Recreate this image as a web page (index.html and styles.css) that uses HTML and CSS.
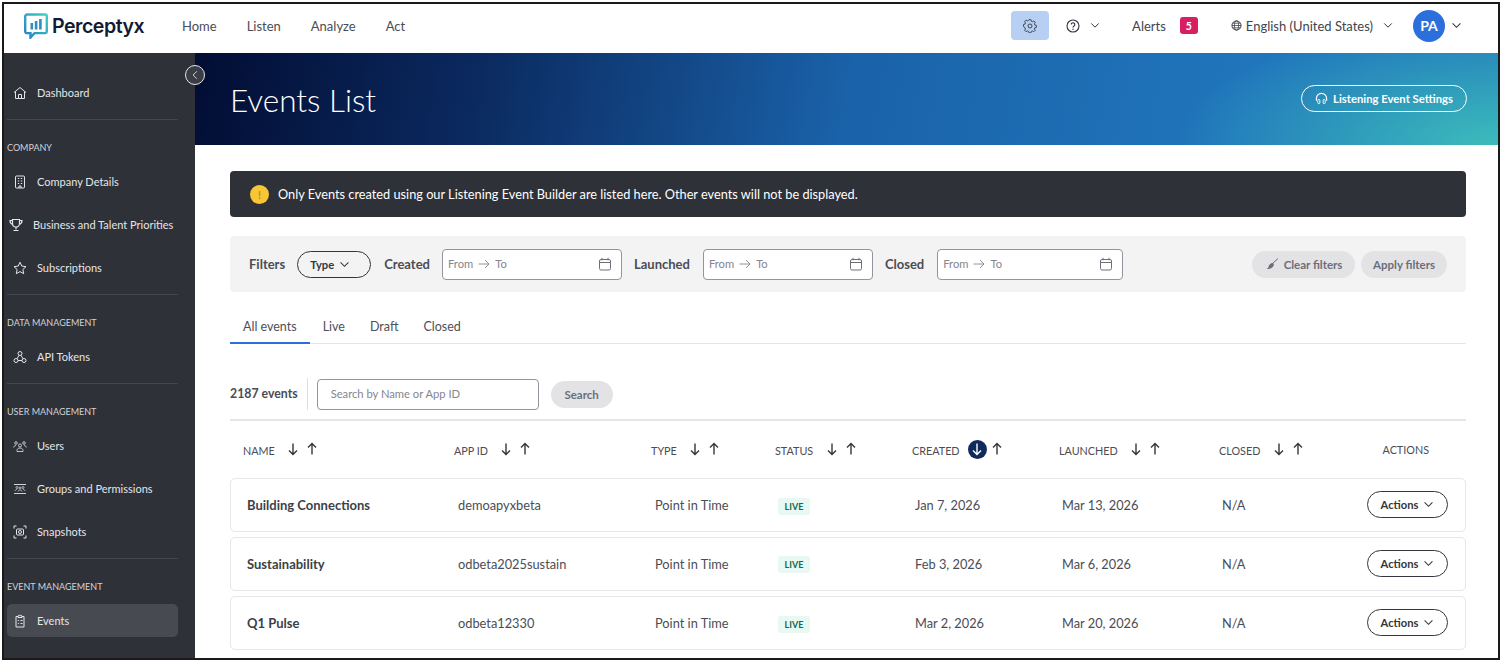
FILE: index.html
```html
<!DOCTYPE html>
<html lang="en">
<head>
<meta charset="utf-8">
<title>Events List</title>
<link rel="stylesheet" href="styles.css">
</head>
<body>
<svg class="defs" width="0" height="0" aria-hidden="true">
  <symbol id="down" viewBox="0 0 12 14"><path d="M6 1.5v11M2 8.5l4 4 4-4" fill="none" stroke="currentColor" stroke-width="1.4"/></symbol>
  <symbol id="up" viewBox="0 0 12 14"><path d="M6 12.500v-11M2 5.500l4-4 4 4" fill="none" stroke="currentColor" stroke-width="1.4"/></symbol>
  <symbol id="chev" viewBox="0 0 12 8"><path d="M1.500 1.500L6 6l4.500-4.500" fill="none" stroke="currentColor" stroke-width="1.200"/></symbol>
  <symbol id="cal" viewBox="0 0 14 14"><rect x="1.500" y="2.500" width="11" height="10.500" rx="1.500" fill="none" stroke="currentColor"/><path d="M1.500 5.500h11M4 .8v2.500M10 .8v2.500" fill="none" stroke="currentColor"/></symbol>
  <symbol id="arrow" viewBox="0 0 12 10"><path d="M.5 5h10.500M7 1l4 4-4 4" fill="none" stroke="currentColor" stroke-width=".9"/></symbol>
</svg>
<div class="frame">
  <header class="topbar">
    <div class="logo">
      <svg class="logo-mark" viewBox="0 0 24 26"><defs><linearGradient id="lg" x1="0" y1="1" x2="1" y2="0"><stop offset="0" stop-color="#2a7fc4"/><stop offset="1" stop-color="#3fd0c0"/></linearGradient></defs><path d="M3 1.500h18a1.800 1.800 0 0 1 1.800 1.800v15a1.800 1.800 0 0 1-1.800 1.800H10.500L6.500 24.500v-4.400H3a1.800 1.800 0 0 1-1.800-1.800v-15A1.800 1.800 0 0 1 3 1.500z" fill="none" stroke="url(#lg)" stroke-width="2.400"/><path d="M6.500 10h2.600v6.500H6.500zM10.800 8h2.600v8.500h-2.600zM15.100 6h2.600v10.500h-2.600z" fill="#2f8fc0"/></svg>
      <span class="logo-text">Perceptyx</span>
    </div>
    <nav class="mainnav">
      <a>Home</a><a>Listen</a><a>Analyze</a><a>Act</a>
    </nav>
    <div class="tools">
      <span class="gear">
        <svg viewBox="0 0 16 16" width="14" height="14"><path d="M6.800 1h2.400l.4 1.900 1.300.6 1.700-1 1.600 1.800-1 1.600.5 1.300 1.800.5v2.400l-1.800.5-.5 1.300 1 1.600-1.700 1.700-1.600-1-1.300.6-.4 1.800H6.800l-.5-1.800-1.300-.6-1.600 1-1.700-1.700 1-1.600-.5-1.300L.4 9.100V6.700l1.800-.5.500-1.300-1-1.600L3.400 1.500l1.600 1 1.300-.6z" transform="translate(.2 -.2) scale(.97)" fill="none" stroke="#3c4048" stroke-width="1.100" stroke-linejoin="round"/><circle cx="8" cy="8" r="2.300" fill="none" stroke="#3c4048" stroke-width="1.100"/></svg>
      </span>
      <span class="help">
        <svg viewBox="0 0 14 14" width="14" height="14"><circle cx="7" cy="7" r="6" fill="none" stroke="#30343b" stroke-width="1.100"/><path d="M5.200 5.600a1.800 1.800 0 1 1 2.800 1.500c-.7.400-1 .7-1 1.400" fill="none" stroke="#30343b" stroke-width="1.100"/><circle cx="7" cy="10.300" r=".7" fill="#30343b"/></svg>
        <svg class="chev" width="10" height="7"><use href="#chev"/></svg>
      </span>
      <span class="alerts">Alerts<b class="badge">5</b></span>
      <span class="lang">
        <svg viewBox="0 0 12 12" width="11" height="11"><circle cx="6" cy="6" r="5" fill="none" stroke="#30343b"/><ellipse cx="6" cy="6" rx="2.300" ry="5" fill="none" stroke="#30343b" stroke-width=".8"/><path d="M1 6h10M1.700 3.500h8.600M1.700 8.500h8.600" stroke="#30343b" stroke-width=".8"/></svg>
        <span class="lang-text">English (United States)</span>
        <svg class="chev" width="10" height="7"><use href="#chev"/></svg>
      </span>
      <span class="avatar">PA</span>
      <svg class="chev avatar-chev" width="11" height="7"><use href="#chev"/></svg>
    </div>
  </header>
  <div class="body">
    <aside class="sidebar">
      <a class="item">
        <svg class="ico" viewBox="0 0 14 14"><path d="M1 6.500L7 1.500l6 5M2.500 5.500V12.500h9V5.500M5.500 12.500V8.500h3v4"/></svg>Dashboard
      </a>
      <hr class="rule">
      <div class="sect">COMPANY</div>
      <a class="item">
        <svg class="ico" viewBox="0 0 14 14"><rect x="2.500" y="1" width="9" height="12" rx="1"/><path d="M4.800 3.500h1.400M7.800 3.500h1.400M4.800 6h1.400M7.800 6h1.400M4.800 8.500h1.400M7.800 8.500h1.400M6 13v-2h2v2"/></svg>Company Details
      </a>
      <a class="item item-wide">
        <svg class="ico" viewBox="0 0 14 14"><path d="M3.500 1.500h7v4a3.500 3.500 0 0 1-7 0zM3.500 2.500H1c0 2.500 1 3.500 3 4M10.500 2.500H13c0 2.500-1 3.500-3 4M7 9v2.500M4.500 12.500h5" stroke-width="1.200"/></svg>Business and Talent Priorities
      </a>
      <a class="item">
        <svg class="ico" viewBox="0 0 14 14"><path d="M7 1.200l1.800 3.900 4.200.5-3.100 2.900.8 4.200L7 10.600l-3.700 2.100.8-4.200L1 5.600l4.200-.5z"/></svg>Subscriptions
      </a>
      <hr class="rule">
      <div class="sect">DATA MANAGEMENT</div>
      <a class="item">
        <svg class="ico" viewBox="0 0 14 14"><circle cx="7" cy="3.500" r="2"/><circle cx="3" cy="10.500" r="2"/><circle cx="11" cy="10.500" r="2"/><path d="M6 5.300L4 8.800M8 5.300l2 3.500M5 10.500h4"/></svg>API Tokens
      </a>
      <hr class="rule">
      <div class="sect">USER MANAGEMENT</div>
      <a class="item">
        <svg class="ico" viewBox="0 0 14 14"><circle cx="3" cy="4" r="1.300" stroke-width=".8"/><circle cx="11" cy="4" r="1.300" stroke-width=".8"/><circle cx="7" cy="6.500" r="1.500" stroke-width=".8"/><path d="M.8 8.500c0-1.500 1-2 2.200-2M13.200 8.500c0-1.500-1-2-2.200-2M4 12.500v-1c0-1.500 1.200-2.500 3-2.500s3 1 3 2.500v1z" stroke-width=".8"/></svg>Users
      </a>
      <a class="item">
        <svg class="ico" viewBox="0 0 14 14"><path d="M1 2.500h12M1 11.500h12" stroke-width=".9"/><circle cx="4" cy="5.500" r="1" stroke-width=".7"/><circle cx="10" cy="5.500" r="1" stroke-width=".7"/><circle cx="7" cy="6" r="1" stroke-width=".7"/><path d="M2 9c0-1 1-1.500 2-1.500M12 9c0-1-1-1.500-2-1.500M5 9.500c0-1 1-1.500 2-1.500s2 .5 2 1.500" stroke-width=".7"/></svg>Groups and Permissions
      </a>
      <a class="item">
        <svg class="ico" viewBox="0 0 14 14"><path d="M3.500 1H1v2.500M10.500 1H13v2.500M3.500 13H1v-2.500M10.500 13H13v-2.500"/><rect x="3.500" y="4" width="7" height="6" rx="1"/><circle cx="7" cy="7" r="1.500"/></svg>Snapshots
      </a>
      <hr class="rule">
      <div class="sect">EVENT MANAGEMENT</div>
      <a class="item active">
        <svg class="ico" viewBox="0 0 14 14"><path d="M5 2.500H3v10.500h8V2.500H9M5 3.500V1.800h1.200a.8.8 0 0 1 1.600 0H9v1.700z"/><path d="M4.800 6.500h1M7.500 6.500h2M4.800 9.500h1M7.500 9.500h2"/></svg>Events
      </a>
    </aside>
    <button class="collapse" aria-label="Collapse"><svg viewBox="0 0 8 12" width="6" height="10"><path d="M6.500 1L1.500 6l5 5" fill="none" stroke="#fff" stroke-width="1"/></svg></button>
    <main class="main">
      <section class="hero">
        <h1>Events List</h1>
        <a class="hero-btn">
          <svg viewBox="0 0 14 14" width="13" height="13"><path d="M1.500 9.500V7a5.500 5.500 0 0 1 11 0v2.500" fill="none" stroke="#fff" stroke-width="1.300"/><rect x="3" y="8" width="2.200" height="4.500" rx="1" fill="none" stroke="#fff"/><rect x="8.800" y="8" width="2.200" height="4.500" rx="1" fill="none" stroke="#fff"/></svg>
          Listening Event Settings
        </a>
      </section>
      <section class="content">
        <div class="banner">
          <span class="warn">!</span>
          Only Events created using our Listening Event Builder are listed here. Other events will not be displayed.
        </div>
        <div class="filters">
          <span class="flabel">Filters</span>
          <span class="pill type-pill">Type <svg width="11" height="7"><use href="#chev"/></svg></span>
          <span class="flabel">Created</span>
          <span class="date d1"><span>From</span><svg class="arr" width="12" height="10"><use href="#arrow"/></svg><span>To</span><svg class="cal" width="14" height="14"><use href="#cal"/></svg></span>
          <span class="flabel flabel-wide">Launched</span>
          <span class="date d2"><span>From</span><svg class="arr" width="12" height="10"><use href="#arrow"/></svg><span>To</span><svg class="cal" width="14" height="14"><use href="#cal"/></svg></span>
          <span class="flabel flabel-wide">Closed</span>
          <span class="date d3"><span>From</span><svg class="arr" width="12" height="10"><use href="#arrow"/></svg><span>To</span><svg class="cal" width="14" height="14"><use href="#cal"/></svg></span>
          <span class="gbtn clear">
            <svg viewBox="0 0 14 14" width="14" height="14"><path d="M13 1.500L7.500 6.500" stroke="#6b6e78" stroke-width="1"/><path d="M8 6c1 1 1 2 .5 3-1 2-3.500 3-7 3 1.500-.7 2-1.500 2.300-3C4.200 7.500 6.500 5.500 8 6z" fill="#6b6e78"/></svg>
            Clear filters
          </span>
          <span class="gbtn apply">Apply filters</span>
        </div>
        <div class="tabs">
          <a class="tab on">All events</a><a class="tab">Live</a><a class="tab">Draft</a><a class="tab">Closed</a>
        </div>
        <div class="searchrow">
          <span class="count">2187 events</span>
          <span class="searchbox">Search by Name or App ID</span>
          <span class="gbtn search">Search</span>
        </div>
        <div class="thead">
          <span class="th">NAME<svg class="sort" width="12" height="14"><use href="#down"/></svg><svg class="sort" width="12" height="14"><use href="#up"/></svg></span>
          <span class="th">APP ID<svg class="sort" width="12" height="14"><use href="#down"/></svg><svg class="sort" width="12" height="14"><use href="#up"/></svg></span>
          <span class="th">TYPE<svg class="sort" width="12" height="14"><use href="#down"/></svg><svg class="sort" width="12" height="14"><use href="#up"/></svg></span>
          <span class="th">STATUS<svg class="sort" width="12" height="14"><use href="#down"/></svg><svg class="sort" width="12" height="14"><use href="#up"/></svg></span>
          <span class="th">CREATED<span class="sort-on"><svg width="12" height="14"><use href="#down"/></svg></span><svg class="sort after-on" width="12" height="14"><use href="#up"/></svg></span>
          <span class="th">LAUNCHED<svg class="sort" width="12" height="14"><use href="#down"/></svg><svg class="sort" width="12" height="14"><use href="#up"/></svg></span>
          <span class="th">CLOSED<svg class="sort" width="12" height="14"><use href="#down"/></svg><svg class="sort" width="12" height="14"><use href="#up"/></svg></span>
          <span class="th th-actions">ACTIONS</span>
        </div>
        <div class="row">
          <b class="name">Building Connections</b><span>demoapyxbeta</span><span>Point in Time</span><span><i class="live low">LIVE</i></span><span>Jan 7, 2026</span><span>Mar 13, 2026</span><span>N/A</span>
          <span class="pill act">Actions <svg width="11" height="7"><use href="#chev"/></svg></span>
        </div>
        <div class="row">
          <b class="name">Sustainability</b><span>odbeta2025sustain</span><span>Point in Time</span><span><i class="live">LIVE</i></span><span>Feb 3, 2026</span><span>Mar 6, 2026</span><span>N/A</span>
          <span class="pill act">Actions <svg width="11" height="7"><use href="#chev"/></svg></span>
        </div>
        <div class="row">
          <b class="name">Q1 Pulse</b><span>odbeta12330</span><span>Point in Time</span><span><i class="live low">LIVE</i></span><span>Mar 2, 2026</span><span>Mar 20, 2026</span><span>N/A</span>
          <span class="pill act">Actions <svg width="11" height="7"><use href="#chev"/></svg></span>
        </div>
      </section>
    </main>
  </div>
</div>
</body>
</html>
```

FILE: styles.css
```css
* { box-sizing: border-box; }
html, body { margin: 0; padding: 0; background: #fff; height: 100%; overflow: hidden; }
body { font-family: "Lato", "Open Sans", sans-serif; color: #3c3f47; font-size: 13px; }
.defs { position: absolute; }
a { color: inherit; text-decoration: none; }

.frame { width: 1498px; height: 658px; margin: 2px 0 0 2px; border: 2px solid #1a1a1a; overflow: hidden; display: flex; flex-direction: column; }

/* top bar */
.topbar { height: 49px; flex: none; display: flex; align-items: center; background: #fff; padding-bottom: 6px; }
.logo { display: flex; align-items: center; margin-left: 20px; width: 158px; }
.logo-mark { width: 24px; height: 26px; margin-right: 4px; }
.logo-text { font-family: "Inter", sans-serif; font-weight: 600; font-size: 19.600px; color: #141a33; letter-spacing: -.5px; }
.mainnav { display: flex; gap: 30px; font-size: 13px; color: #4a4d55; }
.tools { margin-left: auto; display: flex; align-items: center; font-size: 13px; color: #41444c; }
.gear { width: 38px; height: 29px; background: #b6cff3; border-radius: 4px; display: flex; align-items: center; justify-content: center; margin-right: 17px; }
.help { display: flex; align-items: center; gap: 10px; margin-right: 32px; }
.chev { color: #30343b; }
.alerts { display: flex; align-items: center; gap: 14px; margin-right: 33px; }
.badge { width: 18px; height: 17px; border-radius: 3px; background: #d81f63; color: #fff; font-size: 10.500px; display: flex; align-items: center; justify-content: center; font-weight: 700; }
.lang { display: flex; align-items: center; gap: 4px; margin-right: 20px; }
.lang-text { margin-right: 6px; }
.avatar { width: 32px; height: 32px; border-radius: 50%; background: #2a6fdc; color: #fff; font-weight: 700; font-size: 14px; display: flex; align-items: center; justify-content: center; }
.avatar-chev { margin: 0 36px 0 6px; }

/* layout */
.body { flex: 1; display: flex; position: relative; min-height: 0; }
.sidebar { width: 191px; flex: none; background: #2e3138; padding: 23px 17px 0 3px; color: #e4e5e8; font-size: 11px; }
.item { display: flex; align-items: center; height: 33px; margin-bottom: 10px; padding-left: 6px; gap: 10px; border-radius: 5px; white-space: nowrap; }
.item-wide { padding-left: 2px; }
.item.active { background: #484a52; margin-bottom: 0; }
.ico { width: 14px; height: 14px; flex: none; fill: none; stroke: #e4e5e8; stroke-width: 1; }
.rule { margin: 0 0 21px; border: 0; border-top: 1px solid #43464e; }
.sect { height: 14px; line-height: 14px; margin-bottom: 10px; font-size: 9px; color: #d2d3d7; white-space: nowrap; }
.collapse { position: absolute; left: 181px; top: 12px; width: 20px; height: 20px; border-radius: 50%; border: 1px solid #e6e6e6; background: #3a3d45; padding: 0; display: flex; align-items: center; justify-content: center; }

.main { flex: 1; min-width: 0; display: flex; flex-direction: column; }
.hero { height: 92px; flex: none; background: radial-gradient(ellipse 320px 130px at 100% 100%, #3cbcbb, rgba(60, 188, 187, 0)), linear-gradient(100deg, #020d33 0%, #0b2a60 22%, #1a62a9 50%, #2075bb 80%, #2178bc 100%); display: flex; align-items: center; justify-content: space-between; padding: 0 31px 0 35px; color: #fff; }
.hero h1 { margin: 2px 0 0; font-weight: 300; font-size: 31.500px; }
.hero-btn { height: 27px; width: 166px; border: 1px solid #fff; border-radius: 14px; display: flex; align-items: center; justify-content: center; gap: 5px; font-size: 11.300px; font-weight: 700; margin-top: -1px; }

.content { flex: 1; padding: 26px 32px 0 35px; min-height: 0; }
.banner { height: 46px; background: #2e3138; border-radius: 4px; color: #fff; display: flex; align-items: center; padding-left: 20px; font-size: 12.750px; gap: 9px; }
.warn { width: 19px; height: 19px; border-radius: 50%; background: #f8c534; color: #a87f10; font-size: 11px; display: flex; align-items: center; justify-content: center; }
.filters { height: 56px; margin-top: 19px; background: #f3f3f3; border-radius: 4px; display: flex; align-items: center; padding: 0 19px; font-size: 13px; }
.flabel { font-weight: 700; color: #4a4d55; margin-right: 12px; }
.flabel-wide { margin-right: 13px; }
.pill { height: 27px; border: 1px solid #33363d; border-radius: 14px; display: inline-flex; align-items: center; justify-content: center; gap: 5px; font-weight: 700; font-size: 11.200px; color: #33363d; background: #fff; }
.pill svg { color: #33363d; }
.type-pill { width: 74px; margin-right: 13px; background: transparent; justify-content: flex-start; padding-left: 12px; }
.date { height: 31px; background: #fff; border: 1px solid #94949e; border-radius: 4px; display: flex; align-items: center; padding: 0 9px 1px 5px; gap: 5px; font-size: 11.200px; color: #85858f; margin-right: 12px; }
.d1 { width: 180px; }
.d2 { width: 170px; }
.d3 { width: 186px; }
.cal { margin-left: auto; color: #6f6f78; }
.arr { color: #85858f; }
.gbtn { height: 27px; background: #e3e3e6; color: #6b6e78; border-radius: 14px; display: inline-flex; align-items: center; justify-content: center; font-weight: 700; font-size: 11.500px; gap: 5px; }
.clear { width: 103px; margin-left: auto; margin-right: 6px; }
.apply { width: 86px; }
.tabs { display: flex; height: 36px; margin-top: 16px; border-bottom: 1px solid #e4e4e6; }
.tab { padding: 2px 12px 0 13px; display: flex; align-items: center; height: 35px; font-size: 12.500px; color: #4d5058; }
.tab.on { border-bottom: 2px solid #2a6fdc; height: 36px; padding: 2px 13px 0; }
.searchrow { display: flex; align-items: center; margin-top: 34px; height: 32px; }
.count { font-weight: 700; font-size: 12.300px; color: #4a4d55; padding: 0 9px 1px 0; border-right: 1px solid #dedee0; height: 32px; display: flex; align-items: center; margin-right: 9px; }
.searchbox { width: 222px; height: 31px; border: 1px solid #94949e; border-radius: 4px; display: flex; align-items: center; padding: 0 0 1px 13px; font-size: 11.200px; color: #85858f; margin-right: 12px; }
.search { width: 62px; }
.thead { margin-top: 9px; border-top: 2px solid #e6e6e8; display: grid; grid-template-columns: 211px 197px 124px 137px 147px 160px 136px 1fr; height: 59px; padding: 1px 0 0 13px; align-items: center; }
.th { display: flex; align-items: center; font-size: 10.800px; color: #4a4d55; }
.sort { margin-left: 7px; color: #33363d; position: relative; top: -1px; }
.th .sort:first-of-type { margin-left: 12.500px; }
.th .sort.after-on { margin-left: 4.500px; }
.sort-on { width: 19px; height: 19px; border-radius: 50%; background: #0f2b5b; color: #fff; display: flex; align-items: center; justify-content: center; margin-left: 8px; position: relative; top: -1px; }
.th-actions { justify-content: flex-end; padding-right: 37px; position: relative; top: -1px; }
.row { height: 54px; margin-bottom: 5px; border: 1px solid #e6e6e8; border-radius: 5px; display: grid; grid-template-columns: 211px 197px 123px 137px 147px 160px 1fr 81px; align-items: center; padding: 0 17px 1px 16px; font-size: 12.800px; color: #4a4d55; }
.name { color: #3c3f47; font-size: 13px; }
.live { display: inline-flex; width: 32px; height: 17px; align-items: center; justify-content: center; background: #e8f8f3; color: #166a4f; font-style: normal; font-weight: 700; font-size: 9px; border-radius: 3px; }
.low { position: relative; top: 1px; }
.act { width: 81px; }
```
